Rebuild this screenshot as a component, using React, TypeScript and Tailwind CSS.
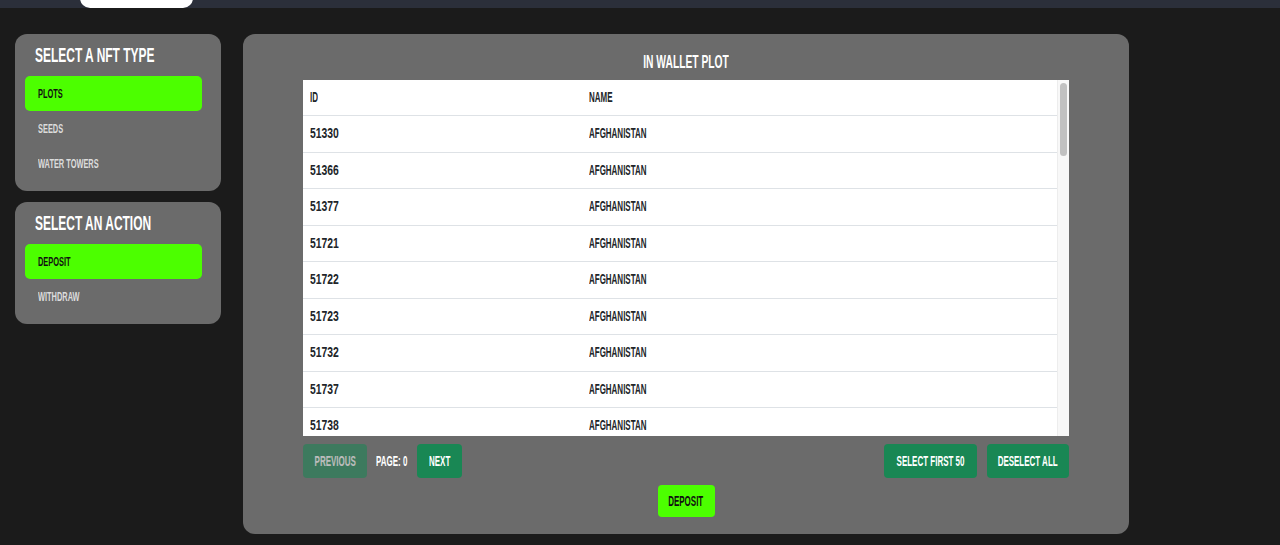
import { useState } from "react";

const ids = [
  51330, 51366, 51377, 51721, 51722, 51723, 51732, 51737, 51738, 51741, 51742, 51745,
  51750, 51753, 51760, 51762, 51768, 51771, 51774, 51780, 51785, 51790, 51793, 51801,
  51804, 51810, 51812, 51817, 51820, 51826, 51831, 51835, 51840, 51844, 51850, 51853,
  51859, 51862, 51866, 51871, 51877, 51880, 51886, 51890, 51895, 51899, 51902, 51908,
];

// no Bebas offline: squeeze Arial-width bold caps to the same narrow look
function Txt({ children, center, num }: { children: React.ReactNode; center?: boolean; num?: boolean }) {
  return (
    <span
      className={`inline-block whitespace-nowrap uppercase ${num ? "scale-x-[0.74]" : "scale-x-[0.57]"} ${center ? "origin-center" : "origin-left"}`}
    >
      {children}
    </span>
  );
}

function SideCard(props: { title: string; items: string[]; active: string; onPick: (v: string) => void }) {
  const { title, items, active, onPick } = props;
  return (
    <div className="rounded-[12px] bg-[#6b6b6b] pb-[10px] pl-[10px] pr-[19px] pt-[9px]">
      <h2 className="pl-[10px] text-[21px] leading-[24px] text-white">
        <Txt>{title}</Txt>
      </h2>
      <div className="mt-[9px] flex flex-col">
        {items.map((item) => (
          <button
            key={item}
            className={`flex h-[35px] items-center rounded-[5px] pl-[13px] text-[13px] ${active === item ? "bg-[#4cff00] text-[#111]" : "text-[#dcdcdc]"}`}
            onClick={() => onPick(item)}
            type="button"
          >
            <Txt>{item}</Txt>
          </button>
        ))}
      </div>
    </div>
  );
}

export default function App() {
  const [nftType, setNftType] = useState("Plots");
  const [action, setAction] = useState("Deposit");
  const btn = "flex h-full items-center justify-center rounded-[4px] bg-[#198754] text-white";

  return (
    <div className="min-h-[545px] bg-[#1b1b1b] font-['Liberation_Sans',Arial,sans-serif] font-bold">
      <div className="h-[8px] overflow-hidden bg-[#2b2f3a]">
        <div className="ml-[80px] -mt-[12px] h-[20px] w-[113px] rounded-[10px] bg-white" />
      </div>
      <div className="flex gap-[22px] pl-[15px] pt-[26px]">
        <div className="flex w-[206px] flex-col gap-[11px]">
          <SideCard title="Select a NFT type" items={["Plots", "Seeds", "Water Towers"]} active={nftType} onPick={setNftType} />
          <SideCard title="Select an action" items={["Deposit", "Withdraw"]} active={action} onPick={setAction} />
        </div>
        <div className="flex h-[500px] w-[886px] flex-col rounded-[12px] bg-[#6b6b6b] px-[60px] pt-[18px]">
          <h1 className="flex h-[20px] justify-center text-[18px] leading-[20px] text-white">
            <Txt center>In wallet plot</Txt>
          </h1>
          <div className="mt-[8px] flex h-[356px] bg-white">
            <div className="flex-1 overflow-hidden text-[14px] text-[#212529]">
              <div className="flex h-[36px] items-center border-b border-[#dee2e6]">
                <div className="w-[279px] pl-[7px]"><Txt>ID</Txt></div>
                <div className="pl-[7px]"><Txt>Name</Txt></div>
              </div>
              {ids.map((id) => (
                <div key={id} className="flex h-[36.5px] items-center border-b border-[#dee2e6]">
                  <div className="w-[279px] pl-[7px]"><Txt num>{id}</Txt></div>
                  <div className="pl-[7px]"><Txt>Afghanistan</Txt></div>
                </div>
              ))}
            </div>
            <div className="w-[12px] border-l border-[#ededed] bg-[#f8f8f8] px-[2px] pt-[3px]">
              <div className="h-[73px] rounded-full bg-[#c1c1c1]" />
            </div>
          </div>
          <div className="mt-[8px] flex h-[34px] items-center text-[14px]">
            <button className={`${btn} w-[64px] opacity-55`} type="button"><Txt center>Previous</Txt></button>
            <span className="ml-[9px] w-[32px] text-white"><Txt>Page: 0</Txt></span>
            <button className={`${btn} ml-[9px] w-[45px]`} type="button"><Txt center>Next</Txt></button>
            <button className={`${btn} ml-auto w-[93px]`} type="button"><Txt center>Select first 50</Txt></button>
            <button className={`${btn} ml-[10px] w-[82px]`} type="button"><Txt center>Deselect all</Txt></button>
          </div>
          <button className="mx-auto mt-[7px] flex h-[32px] w-[57px] items-center justify-center rounded-[4px] bg-[#4cff00] text-[14px] text-[#111]" type="button">
            <Txt center>Deposit</Txt>
          </button>
        </div>
      </div>
    </div>
  );
}
